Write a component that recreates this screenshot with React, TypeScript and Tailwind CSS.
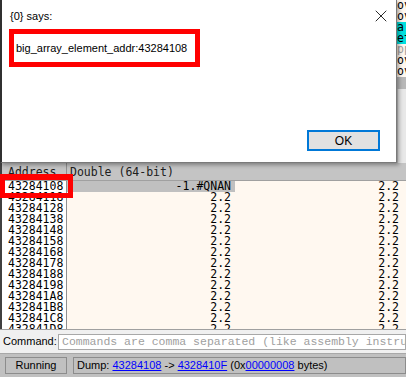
import { X } from "lucide-react"

const rows = [
  "43284108", "43284118", "43284128", "43284138", "43284148", "43284158", "43284168",
  "43284178", "43284188", "43284198", "432841A8", "432841B8", "432841C8", "432841D8",
]

const side = [
  { t: "ov", bg: "" },
  { t: "ov", bg: "" },
  { t: "al", bg: "bg-[#00e0e0]" },
  { t: "et", bg: "bg-[#00e0e0]" },
  { t: "pp", bg: "text-[#a0a0a0]" },
  { t: "ov", bg: "" },
  { t: "ov", bg: "" },
]

const ui = { fontFamily: '"Liberation Sans", Arial, sans-serif' }
const mono = { fontFamily: '"DejaVu Sans Mono", monospace' }

export default function App() {
  return (
    <div className="relative w-[406px] h-[377px] overflow-hidden bg-[#f0f0f0] flex flex-col" style={ui}>
      {/* window behind the dialog */}
      <div className="h-[163px] flex justify-end">
        <div className="w-[9px] flex flex-col text-[11.5px] leading-[11px] bg-[#fff8f0] overflow-hidden whitespace-nowrap" style={mono}>
          {side.map((s, i) => (
            <div key={i} className={`h-[11px] overflow-hidden ${s.bg}`}>{s.t}</div>
          ))}
          <div className="h-[12px] bg-[#b8b8b8]" />
          <div className="flex-1 bg-[#e8e8e8] border-l border-[#c8c8c8]" />
        </div>
      </div>

      {/* dump table */}
      <div className="h-[166px] flex flex-col border-l-2 border-[#404040] text-[11.5px]" style={mono}>
        <div className="h-[18px] shrink-0 flex bg-[#c4c4c4] border-b border-[#a0a0a0] leading-[18px] text-[#202020]">
          <div className="w-[65px] pl-[6px] border-r border-[#909090]">Address</div>
          <div className="pl-[3px]">Double (64-bit)</div>
        </div>
        <div className="flex-1 overflow-hidden bg-[#fff8f0]">
          {rows.map((r, i) => (
            <div key={r} className="h-[11px] leading-[11px] flex text-[#000000]">
              <div className="w-[65px] shrink-0 pl-[6px] bg-white border-r border-[#909090]">{r}</div>
              <div className={`w-[168px] shrink-0 text-right pr-[4px] ${i === 0 ? "bg-[#c0c0c0]" : ""}`}>
                {i === 0 ? "-1.#QNAN" : "2.2"}
              </div>
              <div className="flex-1 text-right pr-[7px]">2.2</div>
            </div>
          ))}
        </div>
      </div>

      {/* command bar */}
      <div className="h-[24px] flex items-center border-t border-[#a0a0a0] bg-[#f0f0f0]">
        <span className="pl-[3px] w-[58px] text-[11px] text-black whitespace-nowrap">Command:</span>
        <div className="flex-1 h-[16px] bg-white border border-[#a8a8a8] pl-[3px] leading-[14px] text-[11.5px] text-[#a0a0a0] whitespace-nowrap overflow-hidden" style={{ fontFamily: '"Liberation Mono", monospace' }}>
          Commands are comma separated (like assembly instructions)
        </div>
      </div>

      {/* status bar */}
      <div className="h-[24px] flex items-center gap-[6px] pl-[5px] bg-[#c0c0c0] border-t border-[#a8a8a8]">
        <div className="w-[62px] h-[17px] flex items-center justify-center border border-[#8c8c8c] text-[11px] text-black">
          Running
        </div>
        <div className="flex-1 h-[17px] flex items-center pl-[3px] border border-[#8c8c8c] text-[11px] text-black whitespace-nowrap">
          Dump:&nbsp;<span className="text-[#0000ff] underline">43284108</span>&nbsp;-&gt;&nbsp;
          <span className="text-[#0000ff] underline">4328410F</span>&nbsp;(0x
          <span className="text-[#0000ff] underline">00000008</span>&nbsp;bytes)
        </div>
      </div>

      {/* message box over the debugger */}
      <div className="absolute left-0 top-0 w-[397px] h-[163px] bg-white border-l-2 border-l-[#303030] border-r border-b border-[#7a7a7a] shadow-[2px_2px_4px_rgba(0,0,0,0.35)] flex flex-col">
        <div className="h-[16px] mt-[8px] flex items-center justify-between pl-[8px] pr-[5px]">
          <span className="text-[11px] text-black">{"{0} says:"}</span>
          <X className="w-[20px] h-[20px] text-black" strokeWidth={1} />
        </div>
        <div className="ml-[7px] mt-[5px] w-[191px] h-[38px] border-[5px] border-[#ff0000] flex items-center pl-[2px] text-[11px] text-black whitespace-nowrap">
          big_array_element_addr:43284108
        </div>
        <div className="flex-1" />
        <div className="flex justify-end pr-[16px] mb-[11px]">
          <div className="w-[73px] h-[21px] bg-[#e1e1e1] border-2 border-[#0078d7] flex items-center justify-center text-[12px] text-black">
            OK
          </div>
        </div>
      </div>

      {/* highlight around the first address */}
      <div className="absolute left-0 top-[174px] w-[73px] h-[24px] border-[5px] border-t-[6px] border-[#ff0000]" />
    </div>
  )
}
